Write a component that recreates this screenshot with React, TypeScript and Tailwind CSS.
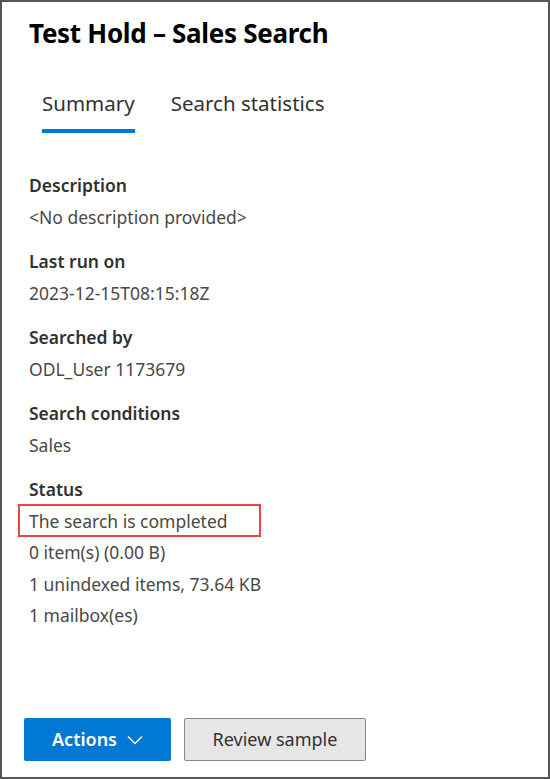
import React from "react";

const font = { fontFamily: '"Segoe UI", "Noto Sans", "Open Sans", sans-serif' };

function Field({ label, values }: { label: string; values: React.ReactNode[] }) {
  return (
    <div className="flex flex-col">
      <div className="text-[17.5px] leading-[22px] font-semibold text-[#323130]">{label}</div>
      {values.map((v, i) => (
        <div key={i} className="mt-[9.5px] text-[17.5px] leading-[22px] text-[#4a4846]">
          {v}
        </div>
      ))}
    </div>
  );
}

export default function App() {
  return (
    <div
      style={font}
      className="w-[550px] h-[779px] border-2 border-[#555555] bg-white flex flex-col relative overflow-hidden"
    >
      <div className="pl-[27px] pt-[14px]">
        <h1 className="text-[26px] leading-[34px] font-bold text-black tracking-[-0.3px]">
          Test Hold – Sales Search
        </h1>
      </div>
      <div className="flex pl-[40px] mt-[39px] gap-[36px]">
        <div className="flex flex-col items-stretch">
          <span className="text-[20.5px] leading-[28px] text-[#323130]">Summary</span>
          <div className="h-[4px] bg-[#0078d4] mt-[12px]" />
        </div>
        <div className="flex flex-col">
          <span className="text-[20.5px] leading-[28px] text-[#323130]">Search statistics</span>
        </div>
      </div>
      <div className="pl-[27px] mt-[41px] flex flex-col gap-[22.5px]">
        <Field label="Description" values={["<No description provided>"]} />
        <Field label="Last run on" values={["2023-12-15T08:15:18Z"]} />
        <Field label="Searched by" values={["ODL_User 1173679"]} />
        <Field label="Search conditions" values={["Sales"]} />
        <Field
          label="Status"
          values={[
            <span className="relative inline-block">
              The search is completed
              <span className="absolute left-[-11px] top-[-6px] w-[243px] h-[33px] border-2 border-[#ee4444]" />
            </span>,
            "0 item(s) (0.00 B)",
            "1 unindexed items, 73.64 KB",
            "1 mailbox(es)",
          ]}
        />
      </div>
      <div className="mt-auto mb-[16px] pl-[22px] flex gap-[13px]">
        <button className="w-[147px] h-[43px] rounded-[2px] bg-[#0078d4] text-white text-[18px] font-semibold flex items-center justify-center gap-[10px]">
          <span>Actions</span>
          <svg width="16" height="10" viewBox="0 0 16 10" fill="none">
            <path d="M1 1.5L8 8.5L15 1.5" stroke="white" strokeWidth="1.4" />
          </svg>
        </button>
        <button className="w-[182px] h-[43px] rounded-[2px] bg-[#e6e6e6] border border-[#8a8886] text-[#323130] text-[18px] flex items-center justify-center">
          Review sample
        </button>
      </div>
    </div>
  );
}
